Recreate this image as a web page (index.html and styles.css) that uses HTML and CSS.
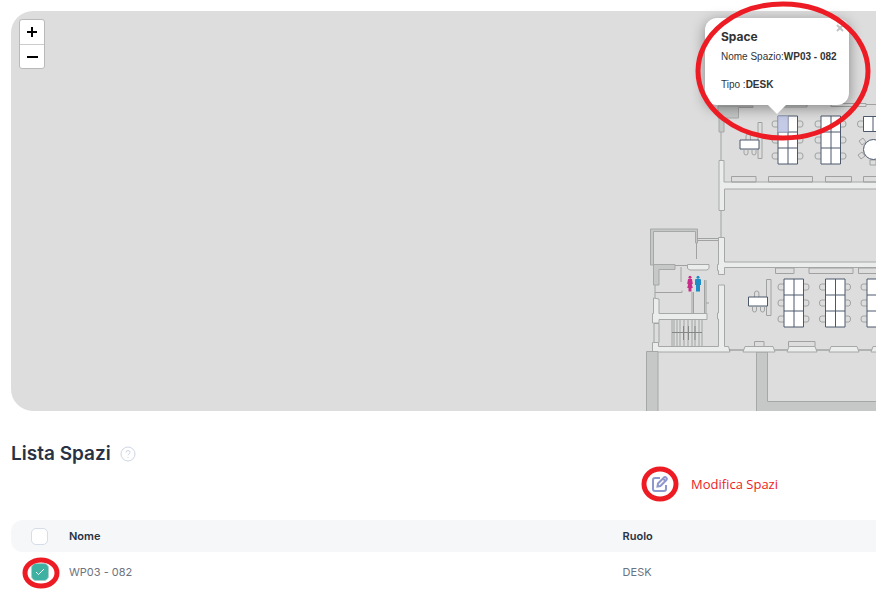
FILE: index.html
```html
<!doctype html>
<html lang="it">
<head>
    <meta charset="UTF-8">
    <meta name="viewport" content="width=device-width, initial-scale=1.0">
    <title>Lista Spazi</title>
    <link rel="stylesheet" href="styles.css">
</head>
<body>
<main class="page">
    <section class="map">
        <svg class="plan" viewBox="640 100 236 311" aria-hidden="true">
            <defs>
                <!-- six desks with chairs on both sides -->
                <g id="chairs">
                    <path class="thin" d="M0 5h-4q-2 0-2 3t2 3h4M20 5h3q2 0 2 3t-2 3h-3"/>
                </g>
                <g id="desks">
                    <use href="#chairs"/>
                    <use href="#chairs" y="16"/>
                    <use href="#chairs" y="32"/>
                    <path class="desk" d="M0 0h19.500v48H0zM10 0v48M0 16h19.500M0 32h19.500"/>
                </g>
                <g id="table">
                    <path class="thin" d="M6 0v-4q0-2 2.200-2t2.200 2v4M4 10v3q0 2 2 2t2-2v-3M12 10v3q0 2 2 2t2-2v-3"/>
                    <path class="desk" d="M0 0h19v9H0z"/>
                </g>
            </defs>

            <!-- upper wing -->
            <path class="grey" d="M718 106h35v1.500h-14.500V118H718zM719 118h5v14h-5z"/>
            <path class="thin" d="M775 105h32v2h-32M831 103.500h35v3h-35zM866 104.500h10M721 132v28M721 210v27"/>
            <path class="wall" d="M719 160.500h5V182h160v7H724.500v21.500H719z"/>
            <path class="thin" d="M731.500 176.500h24.500v5.500h-24.500zM768.500 176.500h44v5.500h-44zM825.500 176.500h26v5.500h-26zM863.500 176.500h20v5.500h-20zM758 122.500h4v36h-4z"/>
            <use href="#table" x="740" y="140"/>
            <use href="#desks" x="778" y="116"/>
            <path class="picked" d="M778 116h10v16h-10z"/>
            <use href="#desks" x="821" y="116"/>
            <use href="#chairs" x="863.500" y="116"/>
            <path class="desk" d="M863.500 116.500h20v15h-20zM873 116.500v15"/>
            <path class="thin" d="m859 141 4-3 3 4-4 3zM858 155l4-3 3 4-4 3zM870 160h6v5h-6z"/>
            <circle class="desk" cx="873.500" cy="149.500" r="10"/>

            <!-- service rooms -->
            <path class="grey" d="M650.500 229h47v14h-2v-11.500H653.500V265h-3zM653.500 264.500H675v5h-16V285h-5.500z"/>
            <path class="thin" d="M697 238.500h21M697 240.500h21M696.500 243v16M675 265.500h12M681 267v15M655 285v13M655 292.500h27v-2M692 292v21M693.500 292v21M704.500 280v33M706 280v33M706 303h3M654 323.500h5v19h-5z"/>
            <path class="wall" d="M687.500 264.500H709v4l-2 1.500h-17l-2.500-1.500z"/>
            <path class="wall" d="M718.500 237.500h6V262H884v5.500H724.500v7h-6v-4h-1v-6h1z"/>
            <path class="wall" d="M653.500 298l5.500 1v14.500h48v6h-48v3.500h-6.500v-9.500h1zM718.500 285h6v61.500h4l1.500 5.500H652.500v-9.500h6v4h60V319h-1v-6h1z"/>
            <path class="thin" d="M672 320v26M674 320v26M677 320v26M680 320v26M684 320v26M688 320v26M692 320v26M695 320v26M699 320v26M702 320v26"/>
            <path class="stairs" d="M672 332.500h30M683.500 326v14M688.500 326v14M695 326v14"/>
            <g class="woman">
                <circle cx="690" cy="277.200" r="1.500"/>
                <path d="M688 279h4l.800 5-1 .200 1 3.800h-1.300v3.500h-3V288h-1.300l1-3.800-1-.200z"/>
            </g>
            <g class="man">
                <circle cx="698" cy="277.200" r="1.500"/>
                <path d="M696 279h4q1 0 1 1v5h-1v6.500h-4V285h-1v-5q0-1 1-1z"/>
            </g>

            <!-- lower wing -->
            <path class="thin" d="M775.500 268h18.500v5.500h-18.500zM809 268h44v5.500h-44zM858.500 268h25v5.500h-25zM766.500 279.500h4.500v36h-4.500zM754.500 341.500h9.500v5h-9.500zM788.500 341.500h26.500v5h-26.500z"/>
            <use href="#table" x="748.500" y="297"/>
            <use href="#desks" x="784" y="279"/>
            <use href="#desks" x="825.500" y="279"/>
            <use href="#desks" x="867" y="279"/>
            <path class="grey" d="M646.500 351.500h11.500V420h-11.500zM756.500 352h11v49.500H884V420H756.500z"/>
            <path class="stairs" d="M729 350h15M774 350h14M816 350h14M858 350h14"/>
            <path class="wall" d="M743 352l2-5.500h28l2 5.500zM787 352l2-5.500h26l2 5.500zM829 352l2-5.500h26l2 5.500zM871 352l2-5.500h26v5.500z"/>
        </svg>

        <div class="zoom">
            <button class="zoom-button" aria-label="Zoom in"><svg width="12" height="12" viewBox="0 0 12 12"><path d="M1 6h10M6 1v10"/></svg></button>
            <button class="zoom-button" aria-label="Zoom out"><svg width="12" height="12" viewBox="0 0 12 12"><path d="M1 6h11"/></svg></button>
        </div>

        <div class="popup">
            <button class="close" aria-label="Chiudi"><svg width="8" height="8" viewBox="0 0 8 8"><path d="M1 1l6 6M7 1L1 7"/></svg></button>
            <h2 class="popup-title">Space</h2>
            <p class="popup-line">Nome Spazio:<b>WP03 - 082</b></p>
            <p class="popup-line">Tipo :<b>DESK</b></p>
        </div>
        <svg class="mark mark-popup" viewBox="0 0 176 140" aria-hidden="true"><ellipse cx="88" cy="70" rx="85" ry="67"/></svg>
    </section>

    <header class="heading">
        <h1 class="title">Lista Spazi</h1>
        <svg class="help" width="16" height="16" viewBox="0 0 16 16" aria-hidden="true">
            <circle cx="8" cy="8" r="7"/>
            <path d="M6 6.500q0-2 2-2t2 1.800q0 1-1 1.600T8 9.300M8 11v1"/>
        </svg>
    </header>

    <div class="toolbar">
        <button class="edit" aria-label="Modifica Spazi">
            <svg class="edit-icon" width="16" height="16" viewBox="0 0 16 16">
                <path d="M8 2H3Q1 2 1 4v9q0 2 2 2h9q2 0 2-2V9"/>
                <path d="M5.500 10.500l.500-3L12 1.500q1-1 2.200.200t.200 2.300l-6 6zM11 2.500L13.500 5"/>
            </svg>
            <svg class="mark mark-edit" viewBox="0 0 38 36"><ellipse cx="19" cy="18" rx="16" ry="15"/></svg>
        </button>
        <span class="note">Modifica Spazi</span>
    </div>

    <table class="spaces">
        <thead>
        <tr>
            <th class="pick"><input class="check" type="checkbox" aria-label="Seleziona tutti"></th>
            <th class="name">Nome</th>
            <th>Ruolo</th>
        </tr>
        </thead>
        <tbody>
        <tr>
            <td class="pick">
                <input class="check" type="checkbox" aria-label="Seleziona WP03 - 082" checked>
                <svg class="tick" width="10" height="8" viewBox="0 0 10 8" aria-hidden="true"><path d="M1 4l2.500 2.500L9 1"/></svg>
                <svg class="mark mark-check" viewBox="0 0 38 32" aria-hidden="true"><ellipse cx="19" cy="16" rx="16" ry="13"/></svg>
            </td>
            <td>WP03 - 082</td>
            <td>DESK</td>
        </tr>
        </tbody>
    </table>
</main>
</body>
</html>
```
FILE: styles.css
```css
body {
    margin: 0;
    background-color: #fff;
    color: #283244;
    font-family: Inter, sans-serif;
}
.page {
    padding: 11px 0 0 11px;
}
button {
    padding: 0;
    border: none;
    background: none;
}
svg {
    display: block;
    fill: none;
}

/* map */
.map {
    position: relative;
    height: 400px;
    border-radius: 22px 0 0 22px;
    background-color: #ddd;
}
.plan {
    position: absolute;
    right: 0;
    bottom: 0;
    width: 236px;
    height: 311px;
}
.thin {
    fill: none;
    stroke: #a0a2a2;
    stroke-width: 1;
}
.wall {
    fill: #ebecec;
    stroke: #a6a8a8;
    stroke-width: 1;
}
.grey {
    fill: #c5c8c7;
    stroke: #a6a8a8;
    stroke-width: 1;
}
.desk {
    fill: #fff;
    stroke: #4c586b;
    stroke-width: 1;
}
.picked {
    fill: #c5cbe6;
    stroke: #a3abc9;
    stroke-width: 1;
}
.stairs {
    stroke: #858787;
    stroke-width: 1;
}
.woman {
    fill: #c72c8b;
}
.man {
    fill: #1d8cc8;
}
.zoom {
    position: absolute;
    left: 8px;
    top: 8px;
    width: 24px;
    border: 1px solid #b9b9b9;
    border-radius: 3px;
    background-color: #fff;
}
.zoom-button {
    display: flex;
    align-items: center;
    justify-content: center;
    width: 100%;
    height: 24px;
}
.zoom-button + .zoom-button {
    border-top: 1px solid #ccc;
}
.zoom-button path {
    stroke: #000;
    stroke-width: 2;
}
.popup {
    position: absolute;
    right: 27px;
    top: 7px;
    box-sizing: border-box;
    width: 144px;
    height: 87px;
    padding: 11px 0 0 16px;
    border-radius: 12px;
    background-color: #fff;
    color: #333;
    box-shadow: 0 3px 14px rgba(0, 0, 0, 0.4);
}
.popup::after {
    content: "";
    position: absolute;
    left: 63px;
    top: 87px;
    border: 9px solid transparent;
    border-top-color: #fff;
    border-bottom: none;
}
.popup-title {
    margin: 0 0 5px;
    font-size: 12px;
    line-height: 16px;
    font-weight: 700;
}
.popup-line {
    margin: 0 0 14px;
    font-family: "Liberation Sans", sans-serif;
    font-size: 10px;
    line-height: 14px;
    white-space: nowrap;
}
.close {
    position: absolute;
    right: 5px;
    top: 6px;
}
.close path {
    stroke: #c3c3c3;
    stroke-width: 2;
}

/* red marks */
.mark {
    position: absolute;
    stroke: #ed1c24;
    stroke-width: 5;
    pointer-events: none;
}
.mark-popup {
    right: 5px;
    top: -10px;
    width: 176px;
    height: 140px;
}
.mark-edit {
    left: 0;
    top: 0;
    width: 38px;
    height: 36px;
}
.mark-check {
    left: 11px;
    top: 5px;
    width: 38px;
    height: 32px;
}

.heading {
    display: flex;
    align-items: center;
    gap: 9px;
    margin-top: 29px;
}
.title {
    margin: 0;
    font-size: 19px;
    line-height: 28px;
    font-weight: 600;
}
.help {
    stroke: #cdd6e2;
    stroke-width: 1;
}
.toolbar {
    display: flex;
    align-items: center;
    justify-content: flex-end;
    gap: 12px;
    margin-top: -2px;
    padding-right: 98px;
}
.edit {
    position: relative;
    display: flex;
    align-items: center;
    justify-content: center;
    width: 38px;
    height: 36px;
}
.edit-icon {
    stroke: #8e98cc;
    stroke-width: 2;
}
.note {
    color: #ed1c24;
    font-family: "Open Sans", sans-serif;
    font-size: 13px;
    line-height: 18px;
}

/* list */
.spaces {
    width: 100%;
    margin-top: 18px;
    border-collapse: separate;
    border-spacing: 0;
    table-layout: fixed;
    text-align: left;
    font-size: 11px;
}
.spaces th {
    height: 32px;
    padding: 0;
    background-color: #f6f7f9;
    font-weight: 600;
}
.spaces td {
    height: 34px;
    padding: 3px 0 0;
    color: #6c7380;
}
.spaces th:first-child {
    border-radius: 12px 0 0 12px;
}
.spaces .pick {
    position: relative;
    width: 38px;
    padding-left: 20px;
}
.name {
    width: 64%;
}
.check {
    appearance: none;
    display: block;
    box-sizing: border-box;
    width: 17px;
    height: 17px;
    margin: 0;
    border: 1px solid #d5dde8;
    border-radius: 5px;
    background-color: #fff;
}
.check:checked {
    width: 18px;
    height: 18px;
    border-color: #a9cfcb;
    background-color: #3fb1a3;
}
.tick {
    position: absolute;
    left: 24px;
    top: 16px;
    stroke: #fff;
    stroke-width: 1;
}
```
